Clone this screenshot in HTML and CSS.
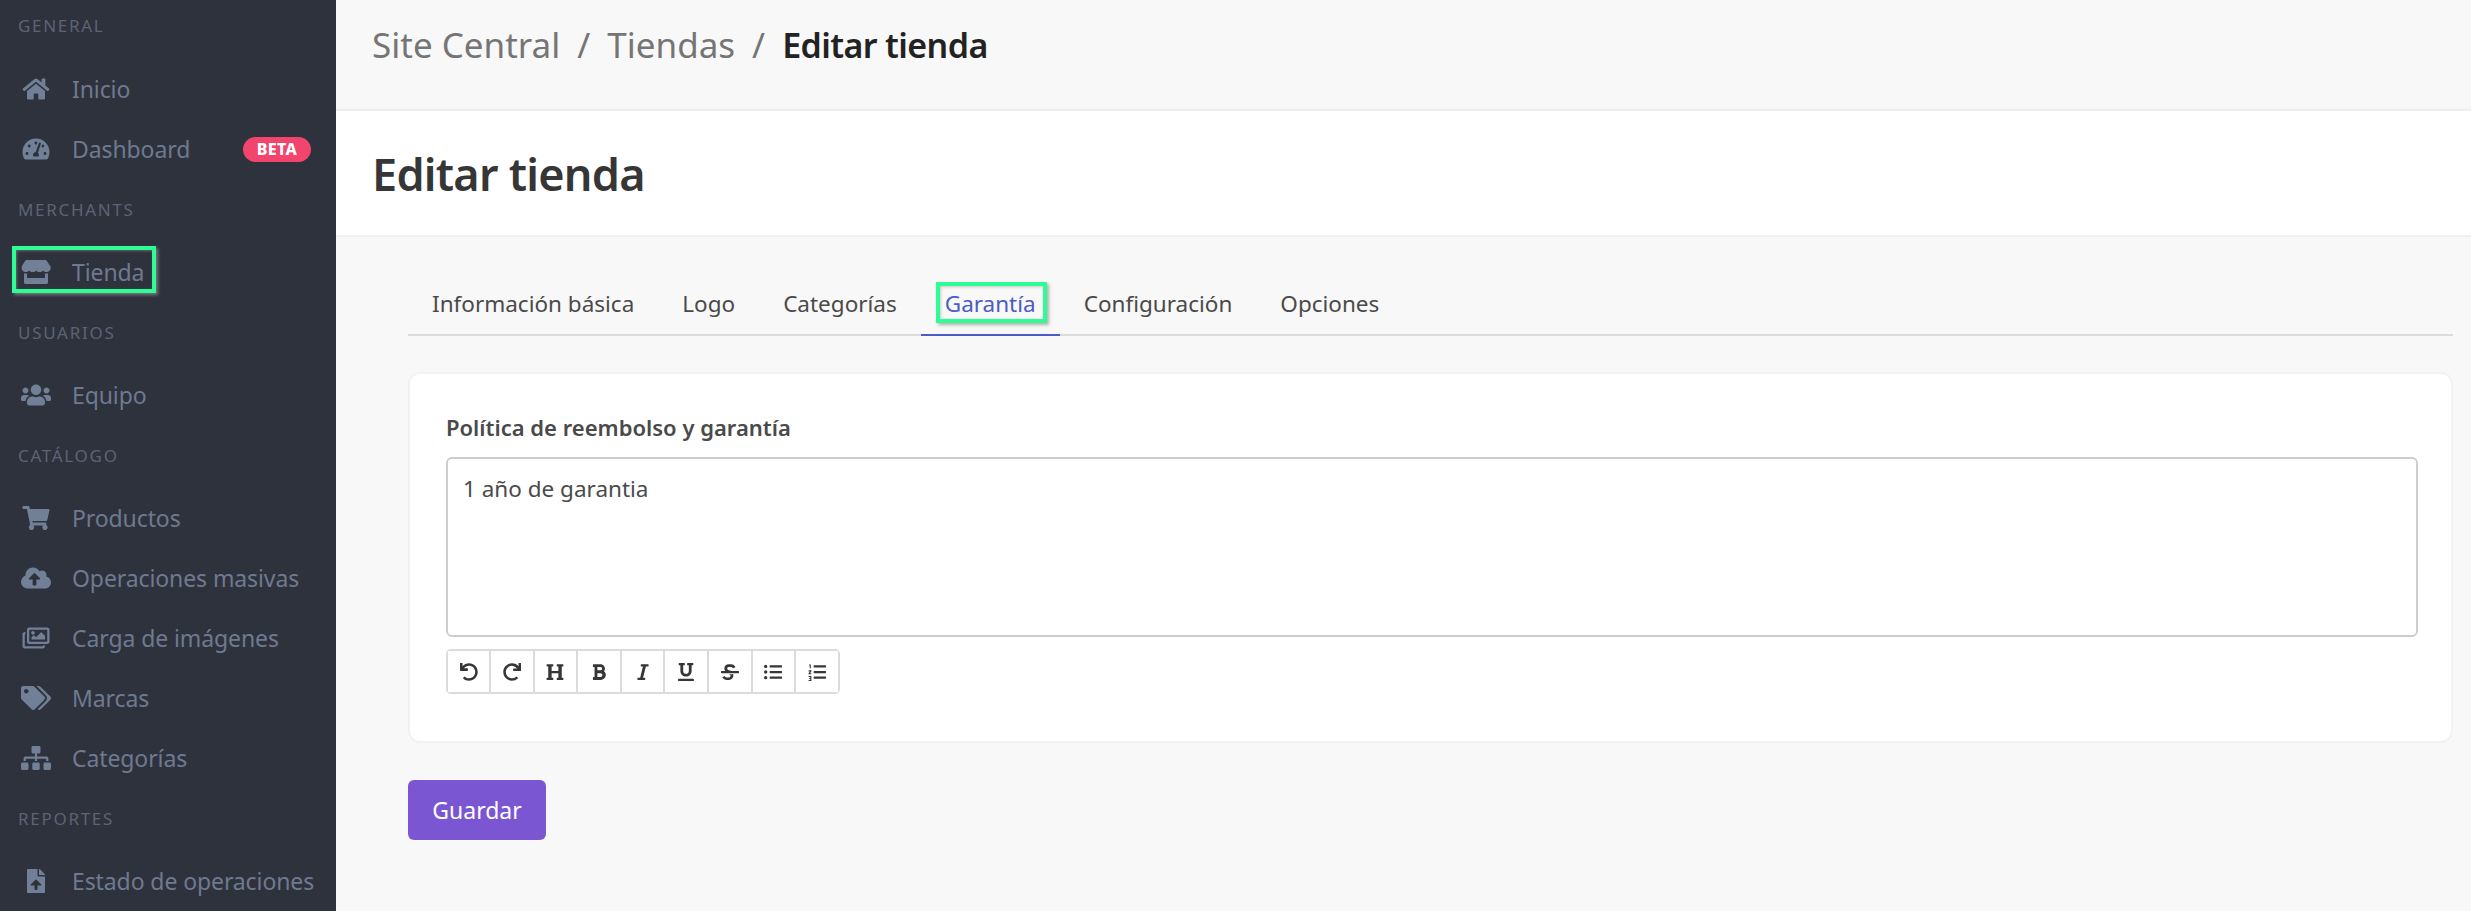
FILE: index.html
```html
<!DOCTYPE html>
<html lang="es">
<head>
<meta charset="utf-8">
<title>Editar tienda</title>
<link rel="stylesheet" href="styles.css">
</head>
<body>
<div class="app">
  <aside class="sidebar">
    <div class="sec sec-first">GENERAL</div>
    <a class="item"><svg class="ic" viewBox="0 0 640 512"><path transform="translate(32 0)" d="M280.37 148.26L96 300.11V464a16 16 0 0 0 16 16l112.06-.29a16 16 0 0 0 15.92-16V368a16 16 0 0 1 16-16h64a16 16 0 0 1 16 16v95.64a16 16 0 0 0 16 16.05L464 480a16 16 0 0 0 16-16V300L295.67 148.26a12.19 12.19 0 0 0-15.3 0zM571.6 251.47L488 182.56V44.05a12 12 0 0 0-12-12h-56a12 12 0 0 0-12 12v72.61L318.47 43a48 48 0 0 0-61 0L4.34 251.47a12 12 0 0 0-1.6 16.9l25.5 31A12 12 0 0 0 45.15 301l235.22-193.74a12.19 12.19 0 0 1 15.3 0L530.9 301a12 12 0 0 0 16.9-1.6l25.5-31a12 12 0 0 0-1.7-16.93z"/></svg><span>Inicio</span></a>
    <a class="item"><svg class="ic" viewBox="0 0 640 512"><path transform="translate(32 0)" d="M288 32C128.94 32 0 160.94 0 320c0 52.8 14.25 102.26 39.06 144.8 5.61 9.62 16.3 15.2 27.44 15.2h443c11.14 0 21.83-5.58 27.44-15.2C561.75 422.26 576 372.8 576 320c0-159.06-128.94-288-288-288zm0 64c14.71 0 26.58 10.13 30.32 23.65-1.11 2.26-2.64 4.23-3.45 6.67l-9.22 27.67c-5.13 3.49-10.97 6.01-17.64 6.01-17.67 0-32-14.33-32-32S270.33 96 288 96zM96 384c-17.67 0-32-14.33-32-32s14.33-32 32-32 32 14.33 32 32-14.33 32-32 32zm48-160c-17.67 0-32-14.33-32-32s14.33-32 32-32 32 14.33 32 32-14.33 32-32 32zm246.77-72.41l-61.33 184C343.13 347.33 352 364.54 352 384c0 11.72-3.38 22.55-8.88 32H232.88c-5.5-9.45-8.88-20.28-8.88-32 0-33.94 26.5-61.43 59.9-63.59l61.34-184.01c4.17-12.56 17.73-19.45 30.36-15.17 12.57 4.19 19.35 17.77 15.17 30.36zm14.66 57.2l15.52-46.55c3.47-1.29 7.13-2.23 11.05-2.23 17.67 0 32 14.33 32 32s-14.33 32-32 32c-11.38-.01-20.89-6.28-26.57-15.22zM480 384c-17.67 0-32-14.33-32-32s14.33-32 32-32 32 14.33 32 32-14.33 32-32 32z"/></svg><span>Dashboard</span><b class="beta">BETA</b></a>
    <div class="sec">MERCHANTS</div>
    <a class="item item-hl"><svg class="ic" viewBox="0 0 640 512"><path transform="translate(12 0)" d="M602 118.6L537.1 15C531.3 5.7 521 0 510 0H106C95 0 84.7 5.7 78.9 15L14 118.6c-33.9 54.1-3.9 129.3 59.4 137.9 4.6.6 9.2.9 13.8.9 29.9 0 56.4-13.2 74.7-33.6 18.3 20.4 44.9 33.6 74.7 33.6 29.9 0 56.4-13.2 74.7-33.6 18.3 20.4 44.9 33.6 74.7 33.6 29.9 0 56.4-13.2 74.7-33.6 18.4 20.4 44.9 33.6 74.7 33.6 4.7 0 9.2-.3 13.8-.9 63.5-8.5 93.6-83.7 59.6-137.9zM529.5 288c-10 0-19.9-1.5-29.5-3.8V384H116v-99.8c-9.6 2.2-19.5 3.8-29.5 3.8-6 0-12.1-.4-18-1.2-5.6-.8-11.1-2.1-16.4-3.6V480c0 17.7 14.3 32 32 32h448c17.7 0 32-14.3 32-32V283.2c-5.4 1.6-10.8 2.9-16.4 3.6-6.1.8-12.1 1.2-18.2 1.2z"/></svg><span>Tienda</span></a>
    <div class="sec">USUARIOS</div>
    <a class="item"><svg class="ic" viewBox="0 0 640 512"><path d="M96 224c35.3 0 64-28.7 64-64s-28.7-64-64-64-64 28.7-64 64 28.7 64 64 64zm448 0c35.3 0 64-28.7 64-64s-28.7-64-64-64-64 28.7-64 64 28.7 64 64 64zm32 32h-64c-17.6 0-33.5 7.1-45.1 18.6 40.3 22.1 68.9 62 75.1 109.4h66c17.7 0 32-14.3 32-32v-32c0-35.3-28.7-64-64-64zm-256 0c61.9 0 112-50.1 112-112S381.9 32 320 32 208 82.1 208 144s50.1 112 112 112zm76.8 32h-8.3c-20.8 10-43.9 16-68.5 16s-47.6-6-68.5-16h-8.3C179.6 288 128 339.6 128 403.2V432c0 26.5 21.5 48 48 48h288c26.5 0 48-21.5 48-48v-28.8c0-63.6-51.6-115.2-115.2-115.2zm-223.7-13.4C161.5 263.1 145.6 256 128 256H64c-35.3 0-64 28.7-64 64v32c0 17.7 14.3 32 32 32h65.9c6.3-47.4 34.9-87.3 75.2-109.4z"/></svg><span>Equipo</span></a>
    <div class="sec">CATÁLOGO</div>
    <a class="item"><svg class="ic" viewBox="0 0 640 512"><path transform="translate(32 0)" d="M528.12 301.319l47.273-208C578.806 78.301 567.391 64 551.99 64H159.208l-9.166-44.81C147.758 8.021 137.93 0 126.529 0H24C10.745 0 0 10.745 0 24v16c0 13.255 10.745 24 24 24h69.883l70.248 343.435C147.325 417.1 136 435.222 136 456c0 30.928 25.072 56 56 56s56-25.072 56-56c0-15.674-6.447-29.835-16.824-40h209.647C430.447 426.165 424 440.326 424 456c0 30.928 25.072 56 56 56s56-25.072 56-56c0-22.172-12.888-41.332-31.579-50.405l5.517-24.276c3.413-15.018-8.002-29.319-23.403-29.319H218.117l-6.545-32h293.145c11.206 0 20.92-7.754 23.403-18.681z"/></svg><span>Productos</span></a>
    <a class="item"><svg class="ic" viewBox="0 0 640 512"><path d="M537.6 226.6c4.1-10.7 6.4-22.4 6.4-34.6 0-53-43-96-96-96-19.7 0-38.1 6-53.3 16.2C367 64.2 315.3 32 256 32c-88.4 0-160 71.6-160 160 0 2.7.1 5.4.2 8.1C40.2 219.8 0 273.2 0 336c0 79.5 64.5 144 144 144h368c70.7 0 128-57.3 128-128 0-61.9-44-113.6-102.4-125.4zM393.4 288H328v112c0 8.8-7.2 16-16 16h-48c-8.8 0-16-7.2-16-16V288h-65.4c-14.3 0-21.4-17.2-11.3-27.3l105.4-105.4c6.2-6.2 16.4-6.2 22.6 0l105.4 105.4c10.1 10.1 2.9 27.3-11.3 27.3z"/></svg><span>Operaciones masivas</span></a>
    <a class="item"><svg class="ic" viewBox="0 0 640 512"><path transform="translate(32 0)" d="M480 416v16c0 26.51-21.49 48-48 48H48c-26.51 0-48-21.49-48-48V176c0-26.51 21.49-48 48-48h16v48H54a6 6 0 0 0-6 6v244a6 6 0 0 0 6 6h372a6 6 0 0 0 6-6v-10h48zm42-336H150a6 6 0 0 0-6 6v244a6 6 0 0 0 6 6h372a6 6 0 0 0 6-6V86a6 6 0 0 0-6-6zm6-48c26.51 0 48 21.49 48 48v256c0 26.51-21.49 48-48 48H144c-26.51 0-48-21.49-48-48V80c0-26.51 21.49-48 48-48h384zM264 144c0 22.091-17.909 40-40 40s-40-17.909-40-40 17.909-40 40-40 40 17.909 40 40zm-72 96l39.515-39.515c4.686-4.686 12.284-4.686 16.971 0L288 240l103.515-103.515c4.686-4.686 12.284-4.686 16.971 0L480 208v80H192v-48z"/></svg><span>Carga de imágenes</span></a>
    <a class="item"><svg class="ic" viewBox="0 0 640 512"><path d="M497.941 225.941L286.059 14.059A48 48 0 0 0 252.118 0H48C21.49 0 0 21.49 0 48v204.118a48 48 0 0 0 14.059 33.941l211.882 211.882c18.744 18.745 49.136 18.746 67.882 0l204.118-204.118c18.745-18.745 18.745-49.137 0-67.882zM112 160c-26.51 0-48-21.49-48-48s21.49-48 48-48 48 21.49 48 48-21.49 48-48 48zm513.941 133.823L421.823 497.941c-18.745 18.745-49.137 18.745-67.882 0l-.36-.36L527.64 323.522c16.999-16.999 26.36-39.6 26.36-63.64s-9.362-46.641-26.36-63.64L331.397 0h48.721a48 48 0 0 1 33.941 14.059l211.882 211.882c18.745 18.745 18.745 49.137 0 67.882z"/></svg><span>Marcas</span></a>
    <a class="item"><svg class="ic" viewBox="0 0 640 512"><path d="M128 352H32c-17.67 0-32 14.33-32 32v96c0 17.67 14.33 32 32 32h96c17.67 0 32-14.33 32-32v-96c0-17.67-14.33-32-32-32zm-24-80h192v48h48v-48h192v48h48v-57.59c0-21.17-17.23-38.41-38.41-38.41H344v-64h40c17.67 0 32-14.33 32-32V32c0-17.67-14.33-32-32-32H256c-17.67 0-32 14.33-32 32v96c0 17.67 14.33 32 32 32h40v64H94.41C73.23 224 56 241.23 56 262.41V320h48v-48zm264 80h-96c-17.67 0-32 14.33-32 32v96c0 17.67 14.33 32 32 32h96c17.67 0 32-14.33 32-32v-96c0-17.67-14.33-32-32-32zm240 0h-96c-17.67 0-32 14.33-32 32v96c0 17.67 14.33 32 32 32h96c17.67 0 32-14.33 32-32v-96c0-17.67-14.33-32-32-32z"/></svg><span>Categorías</span></a>
    <div class="sec">REPORTES</div>
    <a class="item"><svg class="ic" viewBox="0 0 640 512"><path transform="translate(128 0)" d="M224 136V0H24C10.7 0 0 10.7 0 24v464c0 13.3 10.7 24 24 24h336c13.3 0 24-10.7 24-24V160H248c-13.2 0-24-10.8-24-24zm65.18 216.01H224v80c0 8.84-7.16 16-16 16h-32c-8.84 0-16-7.16-16-16v-80H94.82c-14.28 0-21.41-17.29-11.27-27.36l96.42-95.7c6.65-6.61 17.39-6.61 24.04 0l96.42 95.7c10.15 10.07 3.03 27.36-11.25 27.36zM377 105L279.1 7c-4.5-4.5-10.6-7-17-7H256v128h128v-6.1c0-6.3-2.5-12.4-7-16.9z"/></svg><span>Estado de operaciones</span></a>
  </aside>
  <main class="main">
    <nav class="crumbs"><span>Site Central</span><i>/</i><span>Tiendas</span><i>/</i><strong>Editar tienda</strong></nav>
    <header class="head"><h1>Editar tienda</h1></header>
    <section class="content">
      <div class="tabs">
        <a class="tab">Información básica</a>
        <a class="tab">Logo</a>
        <a class="tab">Categorías</a>
        <a class="tab tab-active">Garantía</a>
        <a class="tab">Configuración</a>
        <a class="tab">Opciones</a>
      </div>
      <div class="card">
        <label class="label">Política de reembolso y garantía</label>
        <div class="editor">1 año de garantia</div>
        <div class="toolbar">
          <button class="tool"><svg viewBox="0 0 512 512"><path d="M212.333 224.333H12c-6.627 0-12-5.373-12-12V12C0 5.373 5.373 0 12 0h48c6.627 0 12 5.373 12 12v78.112C117.773 39.279 184.26 7.47 258.175 8.007c136.906.994 246.448 111.623 246.157 248.532C504.041 393.258 393.12 504 256.333 504c-64.089 0-122.496-24.313-166.51-64.215-5.099-4.622-5.334-12.554-.467-17.42l33.967-33.967c4.474-4.474 11.662-4.717 16.401-.525C170.76 415.336 211.58 432 256.333 432c97.268 0 176-78.716 176-176 0-97.267-78.716-176-176-176-58.496 0-110.28 28.476-142.274 72.333h98.274c6.627 0 12 5.373 12 12v48c0 6.627-5.373 12-12 12z"/></svg></button>
          <button class="tool"><svg viewBox="0 0 512 512"><path d="M500.33 0h-47.41a12 12 0 0 0-12 12.57l4 82.76A247.42 247.42 0 0 0 256 8C119.34 8 7.9 119.53 8 256.19 8.1 393.07 119.1 504 256 504a247.1 247.1 0 0 0 166.18-63.91 12 12 0 0 0 .48-17.43l-34-34a12 12 0 0 0-16.38-.55A176 176 0 1 1 402.1 157.8l-101.53-4.87a12 12 0 0 0-12.57 12v47.41a12 12 0 0 0 12 12h200.33a12 12 0 0 0 12-12V12a12 12 0 0 0-12-12z"/></svg></button>
          <button class="tool"><svg viewBox="0 0 512 512"><path d="M448 96v320h32a16 16 0 0 1 16 16v32a16 16 0 0 1-16 16H320a16 16 0 0 1-16-16v-32a16 16 0 0 1 16-16h32V288H160v128h32a16 16 0 0 1 16 16v32a16 16 0 0 1-16 16H32a16 16 0 0 1-16-16v-32a16 16 0 0 1 16-16h32V96H32a16 16 0 0 1-16-16V48a16 16 0 0 1 16-16h160a16 16 0 0 1 16 16v32a16 16 0 0 1-16 16h-32v128h192V96h-32a16 16 0 0 1-16-16V48a16 16 0 0 1 16-16h160a16 16 0 0 1 16 16v32a16 16 0 0 1-16 16z"/></svg></button>
          <button class="tool"><svg viewBox="0 0 384 512"><path d="M333.49 238a122 122 0 0 0 27-65.21C367.87 96.49 308 32 233.42 32H34a16 16 0 0 0-16 16v48a16 16 0 0 0 16 16h31.87v288H34a16 16 0 0 0-16 16v48a16 16 0 0 0 16 16h209.32c70.8 0 134.14-51.75 141-122.4 4.74-48.45-16.39-92.06-50.83-119.6zM145.66 112h87.76a48 48 0 0 1 0 96h-87.76zm87.76 288h-87.76V288h87.76a56 56 0 0 1 0 112z"/></svg></button>
          <button class="tool"><svg viewBox="0 0 320 512"><path d="M320 48v32a16 16 0 0 1-16 16h-62.76l-80 320H208a16 16 0 0 1 16 16v32a16 16 0 0 1-16 16H16a16 16 0 0 1-16-16v-32a16 16 0 0 1 16-16h62.76l80-320H112a16 16 0 0 1-16-16V48a16 16 0 0 1 16-16h192a16 16 0 0 1 16 16z"/></svg></button>
          <button class="tool"><svg viewBox="0 0 448 512"><path d="M32 64h32v160c0 88.22 71.78 160 160 160s160-71.78 160-160V64h32a16 16 0 0 0 16-16V16a16 16 0 0 0-16-16H272a16 16 0 0 0-16 16v32a16 16 0 0 0 16 16h32v160a80 80 0 0 1-160 0V64h32a16 16 0 0 0 16-16V16a16 16 0 0 0-16-16H32a16 16 0 0 0-16 16v32a16 16 0 0 0 16 16zm400 384H16a16 16 0 0 0-16 16v32a16 16 0 0 0 16 16h416a16 16 0 0 0 16-16v-32a16 16 0 0 0-16-16z"/></svg></button>
          <button class="tool"><svg viewBox="0 0 512 512"><path d="M496 224H293.9l-87.17-26.83A43.55 43.55 0 0 1 219.55 112h66.79A49.89 49.89 0 0 1 331 139.58a16 16 0 0 0 21.46 7.15l42.94-21.47a16 16 0 0 0 7.16-21.46l-.53-1A128 128 0 0 0 287.51 32h-68a123.68 123.68 0 0 0-123 135.64c2 20.89 10.1 39.83 21.78 56.36H16a16 16 0 0 0-16 16v32a16 16 0 0 0 16 16h480a16 16 0 0 0 16-16v-32a16 16 0 0 0-16-16zm-180.24 96h-91.25l16.22 5a43.56 43.56 0 0 1-12.83 85.2H161a49.89 49.89 0 0 1-44.45-27.58 16 16 0 0 0-21.46-7.15l-42.94 21.47a16 16 0 0 0-7.16 21.46l.53 1A128 128 0 0 0 160.51 480h68a123.68 123.68 0 0 0 123-135.64c-1.11-11.45-4.07-22-8.65-31.72z"/></svg></button>
          <button class="tool"><svg viewBox="0 0 512 512"><path d="M48 48a48 48 0 1 0 48 48 48 48 0 0 0-48-48zm0 160a48 48 0 1 0 48 48 48 48 0 0 0-48-48zm0 160a48 48 0 1 0 48 48 48 48 0 0 0-48-48zm448 16H176a16 16 0 0 0-16 16v32a16 16 0 0 0 16 16h320a16 16 0 0 0 16-16v-32a16 16 0 0 0-16-16zm0-320H176a16 16 0 0 0-16 16v32a16 16 0 0 0 16 16h320a16 16 0 0 0 16-16V80a16 16 0 0 0-16-16zm0 160H176a16 16 0 0 0-16 16v32a16 16 0 0 0 16 16h320a16 16 0 0 0 16-16v-32a16 16 0 0 0-16-16z"/></svg></button>
          <button class="tool"><svg viewBox="0 0 512 512"><path d="M496 384H176a16 16 0 0 0-16 16v32a16 16 0 0 0 16 16h320a16 16 0 0 0 16-16v-32a16 16 0 0 0-16-16zm0-320H176a16 16 0 0 0-16 16v32a16 16 0 0 0 16 16h320a16 16 0 0 0 16-16V80a16 16 0 0 0-16-16zm0 160H176a16 16 0 0 0-16 16v32a16 16 0 0 0 16 16h320a16 16 0 0 0 16-16v-32a16 16 0 0 0-16-16zM32 40h48v112H48V72H32zM16 208h80v32l-40 48h40v32H16v-32l40-48H16zM16 368h80v144H16v-32h48v-24H32v-32h32v-24H16z"/></svg></button>
        </div>
      </div>
      <button class="save">Guardar</button>
    </section>
  </main>
</div>
</body>
</html>
```

FILE: styles.css
```css
*, *::after { box-sizing: border-box; }
html, body { margin: 0; height: 100%; overflow: hidden; }
body { font-family: "Noto Sans", "Liberation Sans", sans-serif; background: #f8f8f8; color: #4a4a4a; }
.app { display: flex; height: 911px; }

.sidebar { width: 336px; flex: none; background: #2e323c; overflow: hidden; padding-left: 18px; color: #6e7a90; }
.sec { font-size: 17px; line-height: 24px; letter-spacing: 1.7px; color: #5b6475; margin-top: 19px; margin-bottom: 20px; }
.sec-first { margin-top: 14px; margin-bottom: 21px; }
.item { position: relative; display: flex; align-items: center; height: 60px; font-size: 23px; letter-spacing: -.1px; }
.sec + .item { margin-top: 2px; }
.ic { width: 30px; height: 24px; flex: none; margin: 0 21px 0 3px; fill: #718096; }
.beta { margin-left: auto; margin-right: 25px; background: #f1456d; color: #fff; font-size: 16px; font-weight: 800; line-height: 25px; height: 25px; width: 68px; text-align: center; border-radius: 13px; letter-spacing: .3px; }
.item-hl::after { content: ""; position: absolute; left: -6px; top: 4px; width: 144px; height: 47px; border: 4px solid #2efc95; box-shadow: 2px 2px 3px rgba(150,150,150,.7), inset 1px 1px 3px rgba(140,140,140,.6); }

.main { flex: 1; min-width: 0; display: flex; flex-direction: column; }
.crumbs { height: 111px; flex: none; display: flex; align-items: flex-start; padding: 22px 0 0 36px; border-bottom: 2px solid #eeeeee; font-size: 35px; line-height: 46px; color: #757575; }
.crumbs i { font-style: normal; margin: 0 17px; }
.crumbs strong { font-size: 34px; font-weight: 600; color: #222222; letter-spacing: -.6px; }
.head { height: 126px; flex: none; background: #fff; border-bottom: 2px solid #f0f0f0; padding: 2px 0 0 36px; display: flex; align-items: center; }
.head h1 { margin: 0; font-size: 45px; font-weight: 600; color: #363636; line-height: 60px; letter-spacing: -.73px; }

.content { flex: 1; padding: 45px 18px 0 72px; }
.tabs { display: flex; height: 54px; border-bottom: 2px solid #dbdbdb; }
.tab { position: relative; display: block; padding: 0 24px; height: 54px; line-height: 44px; font-size: 22.5px; color: #4a4a4a; }
.tab-active { color: #4a5cc5; border-bottom: 2px solid #4a5cc5; }
.tab-active::after { content: ""; position: absolute; left: 15px; top: 0; width: 111px; height: 41px; border: 4px solid #2efc95; box-shadow: 2px 2px 3px rgba(130,130,130,.6), inset 1px 1px 3px rgba(130,130,130,.4); }

.card { margin-top: 36px; height: 371px; background: #fff; border: 2px solid #f2f2f2; border-radius: 12px; padding: 38px 33px 0 36px; }
.label { display: block; font-size: 22px; font-weight: 600; line-height: 30px; color: #4a4a4a; }
.editor { margin-top: 15px; height: 180px; border: 2px solid #cdcdcd; border-radius: 6px; padding: 14px 15px; font-size: 22.5px; line-height: 32px; color: #4a4a4a; }
.toolbar { display: inline-flex; margin-top: 12px; height: 45px; border: 2px solid #dbdbdb; border-radius: 5px; }
.tool { width: 43.6px; padding: 0; background: #fff; border: 0; border-left: 2px solid #dbdbdb; display: flex; align-items: center; justify-content: center; }
.tool:first-child { border-left: 0; width: 41px; }
.tool svg { width: 18px; height: 18px; fill: #363636; }

.save { display: block; margin-top: 37px; width: 138px; height: 60px; background: #7b56d3; color: #fff; border: 0; border-radius: 6px; font-family: inherit; font-size: 23px; }
```
